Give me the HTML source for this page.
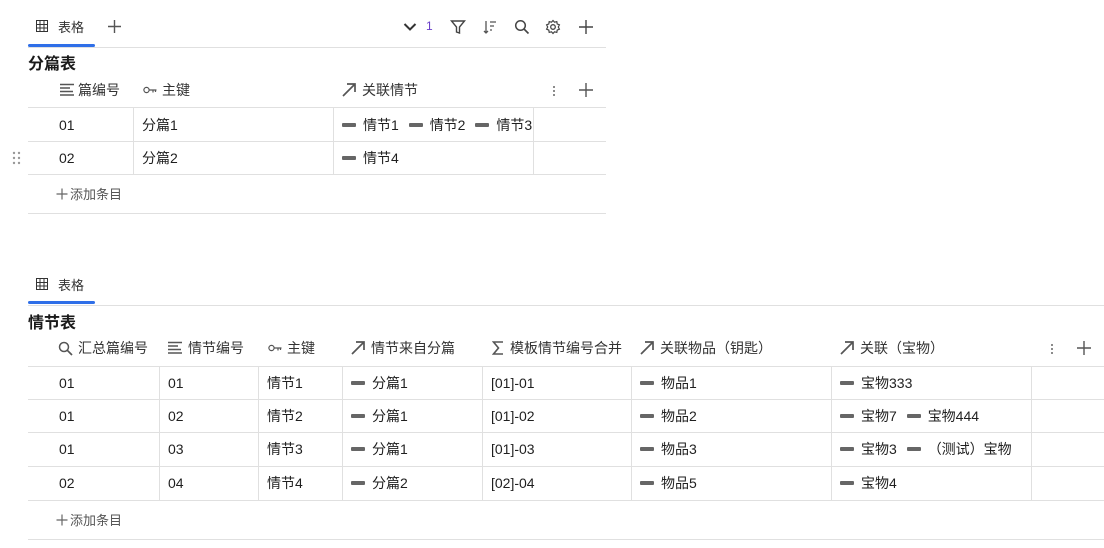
<!DOCTYPE html>
<html><head><meta charset="utf-8"><style>
*{margin:0;padding:0;box-sizing:border-box}
body{width:1104px;height:548px;background:#fff;position:relative;overflow:hidden;font-family:"Liberation Sans","Noto Sans CJK SC",sans-serif;font-size:14px;color:#1f1f1f}
.a{position:absolute;white-space:nowrap}
.n{margin-top:2px}
.h{position:absolute;height:1px;background:#e0e0e0}
.v{position:absolute;width:1px;background:#e0e0e0}
.t{font-size:13px;color:#333}
.ttl{font-size:16px;font-weight:bold;color:#1a1a1a}
.dash{display:inline-block;width:14px;height:4px;background:#666;border-radius:1px;vertical-align:middle;margin-right:7px;position:relative;top:-1px}
.lk{margin-right:6px}
.ic{position:absolute}
.add{font-size:13px;color:#555}
.hd{color:#333}
</style></head><body>
<!-- top tab bar -->
<svg class="ic" style="left:36px;top:20px" width="12" height="12" viewBox="0 0 12 12"><rect x="0.5" y="0.5" width="11" height="11" fill="none" stroke="#333"/><path d="M0 4.5H12M0 8H12M4 0V12M8 0V12" stroke="#333"/></svg>
<div class="a t" style="left:58px;top:17px">表格</div>
<svg class="ic" style="left:107px;top:19px" width="15" height="15"><path d="M7.5 1V14M1 7.5H14" stroke="#555" stroke-width="1.4"/></svg>
<div class="a" style="left:28px;top:44px;width:67px;height:3px;background:#2f6fe8;border-radius:2px"></div>
<div class="h" style="left:28px;top:47px;width:578px"></div>
<svg class="ic" style="left:403px;top:22px" width="14" height="10"><path d="M1.5 2L7 7.5L12.5 2" stroke="#333" stroke-width="2" fill="none"/></svg>
<div class="a" style="left:426px;top:19px;font-size:12px;color:#6a3fc9">1</div>
<svg class="ic" style="left:450px;top:19px" width="16" height="16"><path d="M1.5 2H14.5L9.5 8V14L6.5 13V8Z" fill="none" stroke="#444" stroke-width="1.4"/></svg>
<svg class="ic" style="left:482px;top:19px" width="16" height="16"><path d="M4 2V14M2 12L4 14L6 12M8 3H14M8 7H12M8 11H10" stroke="#555" stroke-width="1.3" fill="none"/></svg>
<svg class="ic" style="left:514px;top:19px" width="16" height="16"><circle cx="6.5" cy="6.5" r="4.8" fill="none" stroke="#444" stroke-width="1.5"/><path d="M10 10L14.5 14.5" stroke="#444" stroke-width="1.6"/></svg>
<svg class="ic" style="left:545px;top:19px" width="16" height="16"><circle cx="8" cy="8" r="2.3" fill="none" stroke="#444" stroke-width="1.3"/><path d="M8 1.5L9.5 3.2L11.8 2.6L12.2 4.9L14.4 5.8L13.3 8L14.4 10.2L12.2 11.1L11.8 13.4L9.5 12.8L8 14.5L6.5 12.8L4.2 13.4L3.8 11.1L1.6 10.2L2.7 8L1.6 5.8L3.8 4.9L4.2 2.6L6.5 3.2Z" fill="none" stroke="#444" stroke-width="1.2"/></svg>
<svg class="ic" style="left:578px;top:19px" width="16" height="16"><path d="M8 1V15M1 8H15" stroke="#444" stroke-width="1.4"/></svg>
<div class="a ttl" style="left:28px;top:50px">分篇表</div>
<!-- header -->
<svg class="ic" style="left:60px;top:83px" width="14" height="14"><path d="M0 1.5H14M0 5H10M0 8.5H13M0 12H14" stroke="#555" stroke-width="1.5"/></svg>
<div class="a hd" style="left:78px;top:80px">篇编号</div>
<svg class="ic" style="left:143px;top:86px" width="14" height="8"><circle cx="3.5" cy="4" r="2.6" fill="none" stroke="#555" stroke-width="1.2"/><path d="M6 4H13.5M10 4V6.5M12.5 4V6" stroke="#555" stroke-width="1.2" fill="none"/></svg>
<div class="a hd" style="left:162px;top:80px">主键</div>
<svg class="ic" style="left:342px;top:83px" width="14" height="14"><path d="M1 13L13 1M5 1H13V9" stroke="#555" stroke-width="1.7" fill="none"/></svg>
<div class="a hd" style="left:362px;top:80px">关联情节</div>
<svg class="ic" style="left:552px;top:85px" width="4" height="12"><circle cx="2" cy="2" r="1" fill="#666"/><circle cx="2" cy="6" r="1" fill="#666"/><circle cx="2" cy="10" r="1" fill="#666"/></svg>
<svg class="ic" style="left:578px;top:82px" width="16" height="16"><path d="M8 1V15M1 8H15" stroke="#555" stroke-width="1.4"/></svg>
<div class="h" style="left:28px;top:107px;width:578px"></div>
<div class="h" style="left:28px;top:141px;width:578px"></div>
<div class="h" style="left:28px;top:174px;width:578px"></div>
<div class="h" style="left:28px;top:213px;width:578px"></div>
<div class="v" style="left:133px;top:107px;height:67px"></div>
<div class="v" style="left:333px;top:107px;height:67px"></div>
<div class="v" style="left:533px;top:107px;height:67px"></div>
<div class="a n" style="left:59px;top:115px">01</div>
<div class="a" style="left:142px;top:115px">分篇1</div>
<div class="a" style="left:342px;top:115px;width:191px;overflow:hidden"><span class="dash"></span>情节1 <span class="lk"></span><span class="dash"></span>情节2 <span class="lk"></span><span class="dash"></span>情节3</div>
<div class="a n" style="left:59px;top:148px">02</div>
<div class="a" style="left:142px;top:148px">分篇2</div>
<div class="a" style="left:342px;top:148px"><span class="dash"></span>情节4</div>
<svg class="ic" style="left:12px;top:151px" width="10" height="14"><g fill="#999"><circle cx="2" cy="2" r="1.2"/><circle cx="7" cy="2" r="1.2"/><circle cx="2" cy="7" r="1.2"/><circle cx="7" cy="7" r="1.2"/><circle cx="2" cy="12" r="1.2"/><circle cx="7" cy="12" r="1.2"/></g></svg>
<svg class="ic" style="left:56px;top:188px" width="12" height="12"><path d="M6 0.5V11.5M0.5 6H11.5" stroke="#666" stroke-width="1.2"/></svg>
<div class="a add" style="left:70px;top:184px">添加条目</div>

<!-- bottom -->
<svg class="ic" style="left:36px;top:278px" width="12" height="12" viewBox="0 0 12 12"><rect x="0.5" y="0.5" width="11" height="11" fill="none" stroke="#333"/><path d="M0 4.5H12M0 8H12M4 0V12M8 0V12" stroke="#333"/></svg>
<div class="a t" style="left:58px;top:275px">表格</div>
<div class="a" style="left:28px;top:301px;width:67px;height:3px;background:#2f6fe8;border-radius:2px"></div>
<div class="h" style="left:28px;top:305px;width:1076px"></div>
<div class="a ttl" style="left:28px;top:309px">情节表</div>
<svg class="ic" style="left:58px;top:341px" width="15" height="15"><circle cx="6" cy="6" r="4.5" fill="none" stroke="#555" stroke-width="1.5"/><path d="M9.3 9.3L14 14" stroke="#555" stroke-width="1.7"/></svg>
<div class="a hd" style="left:78px;top:338px">汇总篇编号</div>
<svg class="ic" style="left:168px;top:341px" width="14" height="14"><path d="M0 1.5H14M0 5H10M0 8.5H13M0 12H14" stroke="#555" stroke-width="1.5"/></svg>
<div class="a hd" style="left:188px;top:338px">情节编号</div>
<svg class="ic" style="left:268px;top:344px" width="14" height="8"><circle cx="3.5" cy="4" r="2.6" fill="none" stroke="#555" stroke-width="1.2"/><path d="M6 4H13.5M10 4V6.5M12.5 4V6" stroke="#555" stroke-width="1.2" fill="none"/></svg>
<div class="a hd" style="left:287px;top:338px">主键</div>
<svg class="ic" style="left:351px;top:341px" width="14" height="14"><path d="M1 13L13 1M5 1H13V9" stroke="#555" stroke-width="1.7" fill="none"/></svg>
<div class="a hd" style="left:371px;top:338px">情节来自分篇</div>
<svg class="ic" style="left:492px;top:341px" width="12" height="14"><path d="M11 1H1.5L6.5 7L1.5 13H11" stroke="#555" stroke-width="1.6" fill="none"/></svg>
<div class="a hd" style="left:510px;top:338px">模板情节编号合并</div>
<svg class="ic" style="left:640px;top:341px" width="14" height="14"><path d="M1 13L13 1M5 1H13V9" stroke="#555" stroke-width="1.7" fill="none"/></svg>
<div class="a hd" style="left:660px;top:338px">关联物品（钥匙）</div>
<svg class="ic" style="left:840px;top:341px" width="14" height="14"><path d="M1 13L13 1M5 1H13V9" stroke="#555" stroke-width="1.7" fill="none"/></svg>
<div class="a hd" style="left:860px;top:338px">关联（宝物）</div>
<svg class="ic" style="left:1050px;top:343px" width="4" height="12"><circle cx="2" cy="2" r="1" fill="#666"/><circle cx="2" cy="6" r="1" fill="#666"/><circle cx="2" cy="10" r="1" fill="#666"/></svg>
<svg class="ic" style="left:1076px;top:340px" width="16" height="16"><path d="M8 1V15M1 8H15" stroke="#555" stroke-width="1.4"/></svg>
<div class="h" style="left:28px;top:366px;width:1076px"></div>
<div class="h" style="left:28px;top:399px;width:1076px"></div>
<div class="h" style="left:28px;top:432px;width:1076px"></div>
<div class="h" style="left:28px;top:466px;width:1076px"></div>
<div class="h" style="left:28px;top:500px;width:1076px"></div>
<div class="h" style="left:28px;top:539px;width:1076px"></div>
<div class="v" style="left:159px;top:366px;height:134px"></div>
<div class="v" style="left:258px;top:366px;height:134px"></div>
<div class="v" style="left:342px;top:366px;height:134px"></div>
<div class="v" style="left:482px;top:366px;height:134px"></div>
<div class="v" style="left:631px;top:366px;height:134px"></div>
<div class="v" style="left:831px;top:366px;height:134px"></div>
<div class="v" style="left:1031px;top:366px;height:134px"></div>

<div class="a n" style="left:59px;top:373px">01</div><div class="a n" style="left:168px;top:373px">01</div><div class="a" style="left:267px;top:373px">情节1</div><div class="a" style="left:351px;top:373px"><span class="dash"></span>分篇1</div><div class="a n" style="left:491px;top:373px">[01]-01</div><div class="a" style="left:640px;top:373px"><span class="dash"></span>物品1</div><div class="a" style="left:840px;top:373px"><span class="dash"></span>宝物333</div>
<div class="a n" style="left:59px;top:406px">01</div><div class="a n" style="left:168px;top:406px">02</div><div class="a" style="left:267px;top:406px">情节2</div><div class="a" style="left:351px;top:406px"><span class="dash"></span>分篇1</div><div class="a n" style="left:491px;top:406px">[01]-02</div><div class="a" style="left:640px;top:406px"><span class="dash"></span>物品2</div><div class="a" style="left:840px;top:406px"><span class="dash"></span>宝物7 <span class="lk"></span><span class="dash"></span>宝物444</div>
<div class="a n" style="left:59px;top:439px">01</div><div class="a n" style="left:168px;top:439px">03</div><div class="a" style="left:267px;top:439px">情节3</div><div class="a" style="left:351px;top:439px"><span class="dash"></span>分篇1</div><div class="a n" style="left:491px;top:439px">[01]-03</div><div class="a" style="left:640px;top:439px"><span class="dash"></span>物品3</div><div class="a" style="left:840px;top:439px"><span class="dash"></span>宝物3 <span class="lk"></span><span class="dash"></span>（测试）宝物</div>
<div class="a n" style="left:59px;top:473px">02</div><div class="a n" style="left:168px;top:473px">04</div><div class="a" style="left:267px;top:473px">情节4</div><div class="a" style="left:351px;top:473px"><span class="dash"></span>分篇2</div><div class="a n" style="left:491px;top:473px">[02]-04</div><div class="a" style="left:640px;top:473px"><span class="dash"></span>物品5</div><div class="a" style="left:840px;top:473px"><span class="dash"></span>宝物4</div>
<svg class="ic" style="left:56px;top:514px" width="12" height="12"><path d="M6 0.5V11.5M0.5 6H11.5" stroke="#666" stroke-width="1.2"/></svg>
<div class="a add" style="left:70px;top:510px">添加条目</div>
</body></html>
